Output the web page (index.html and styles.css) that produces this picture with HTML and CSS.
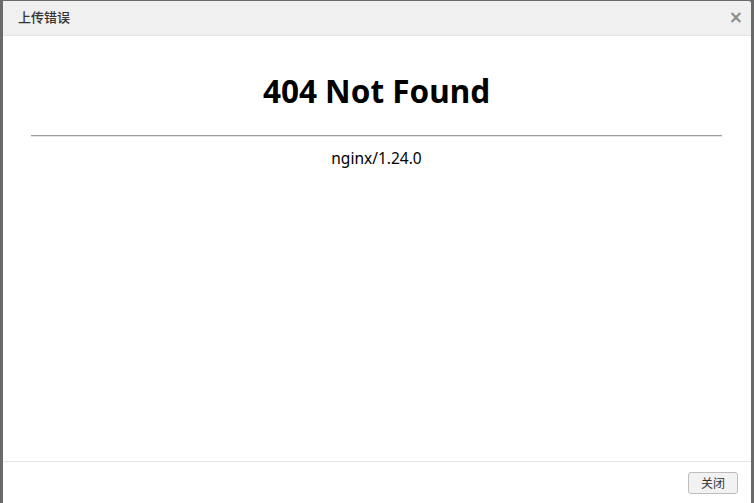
FILE: index.html
```html
<!DOCTYPE html>
<html lang="zh">
<head>
<meta charset="utf-8">
<title>上传错误</title>
<link rel="stylesheet" href="styles.css">
</head>
<body>
<div class="backdrop">
  <div class="dialog">
    <div class="dialog-header">
      <span class="dialog-title">上传错误</span>
      <span class="dialog-close">×</span>
    </div>
    <div class="dialog-body">
      <div class="frame">
        <h1 class="err-title">404 Not Found</h1>
        <hr class="err-rule">
        <div class="err-server">nginx/1.24.0</div>
      </div>
    </div>
    <div class="dialog-footer">
      <button class="btn">关闭</button>
    </div>
  </div>
</div>
</body>
</html>
```
FILE: styles.css
```css
html, body {
  margin: 0;
  padding: 0;
  height: 100%;
}
body {
  background: #6a6a6a;
  font-family: "Noto Sans", "Noto Sans CJK SC", sans-serif;
  overflow: hidden;
}
.backdrop {
  height: 100%;
  padding: 1px 3px 0 3px;
  box-sizing: border-box;
  display: flex;
}
.dialog {
  flex: 1;
  background: #fff;
  border-top-right-radius: 3px;
  display: flex;
  flex-direction: column;
  height: 503px;
}
.dialog-header {
  height: 34px;
  flex: none;
  background: #f0f0f0;
  border-bottom: 1px solid #e3e3e3;
  display: flex;
  align-items: center;
  justify-content: space-between;
  padding: 0 8px 0 15px;
  border-top-right-radius: 3px;
}
.dialog-title {
  font-family: "Noto Sans CJK SC", sans-serif;
  font-size: 13px;
  font-weight: 500;
  color: #333;
  margin-top: -3px;
}
.dialog-close {
  font-family: "DejaVu Sans", sans-serif;
  font-size: 17px;
  font-weight: bold;
  color: #8c8c8c;
  line-height: 1;
  margin-top: -1px;
}
.dialog-body {
  flex: 1;
  padding: 0 21px 0 20px;
}
.frame {
  padding: 8px 8px 0 8px;
  text-align: center;
  color: #000;
}
.err-title {
  margin: 26px 0 0 0;
  font-family: "Noto Sans", sans-serif;
  font-size: 31.5px;
  font-weight: bold;
  line-height: 42px;
}
.err-rule {
  margin: 23px 0 0 0;
  border: 0;
  border-top: 1px solid #a0a0a0;
  border-bottom: 1px solid #e4e4e4;
  height: 0;
}
.err-server {
  margin-top: 10px;
  font-size: 15.5px;
  line-height: 22px;
}
.dialog-footer {
  flex: none;
  height: 42px;
  border-top: 1px solid #e5e5e5;
  display: flex;
  align-items: center;
  justify-content: flex-end;
  padding: 0 13px 0 0;
}
.btn {
  width: 50px;
  height: 22px;
  padding: 0;
  border: 1px solid #bdbdbd;
  border-radius: 3px;
  background: #f2f2f2;
  font-family: "Noto Sans CJK SC", sans-serif;
  font-size: 12px;
  color: #333;
  margin-top: -1px;
}
```
